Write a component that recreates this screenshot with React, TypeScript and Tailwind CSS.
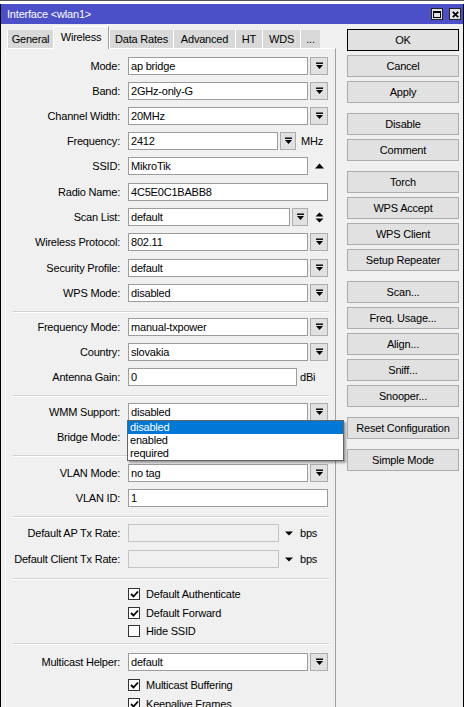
import React from "react";

const DropIcon = () => (
  <svg width="9" height="8" viewBox="0 0 9 8">
    <rect x="1" y="0.5" width="7" height="1.4" fill="#000" />
    <path d="M1 3h7L4.5 7z" fill="#000" />
  </svg>
);

const DropBtn = ({ className = "w-[18px]" }: { className?: string }) => (
  <div className={`${className} h-[18px] border border-[#adadad] bg-[#e1e1e1] flex items-center justify-center`}>
    <DropIcon />
  </div>
);

const Input = ({
  className,
  value = "",
  disabled = false,
}: {
  className: string;
  value?: string;
  disabled?: boolean;
}) => (
  <div
    className={`${className} h-[18px] border ${
      disabled ? "border-[#c4c4c4] bg-[#f0f0f0]" : "border-[#9c9c9c] bg-white"
    } pl-[2px] leading-[16px] whitespace-nowrap overflow-hidden`}
  >
    {value}
  </div>
);

const Row = ({
  label,
  mt,
  children,
}: {
  label: string;
  mt: string;
  children?: React.ReactNode;
}) => (
  <div className={`flex items-center h-[18px] ${mt}`}>
    <div className="w-[114px] text-right whitespace-nowrap">{label}</div>
    <div className="ml-[8px] flex items-center">{children}</div>
  </div>
);

const Select = ({ value }: { value: string }) => (
  <>
    <Input className="w-[180px]" value={value} />
    <div className="ml-[2px]">
      <DropBtn />
    </div>
  </>
);

const Sep = ({ mt }: { mt: string }) => (
  <div className={`${mt} ml-[7px] w-[316px] h-[2px] border-t border-[#d2d2d2] border-b border-b-white`} />
);

const Check = ({ label, checked, mt }: { label: string; checked: boolean; mt: string }) => (
  <div className={`flex items-center h-[12px] leading-[12px] ${mt} ml-[122px]`}>
    <div className="w-[12px] h-[12px] border border-[#333] bg-white flex items-center justify-center">
      {checked && (
        <svg width="9" height="8" viewBox="0 0 9 8">
          <path d="M1 4l2.5 2.5L8 1.5" stroke="#000" strokeWidth="1.8" fill="none" />
        </svg>
      )}
    </div>
    <span className="ml-[6px] whitespace-nowrap">{label}</span>
  </div>
);

const Btn = ({ label, mt, ok = false }: { label: string; mt: string; ok?: boolean }) => (
  <div
    className={`${mt} w-[112px] h-[22px] flex items-center justify-center border ${
      ok ? "border-black" : "border-[#adadad]"
    } bg-[#e1e1e1] whitespace-nowrap`}
  >
    {label}
  </div>
);

const tabs = [
  { name: "General", w: "w-[46px]" },
  { name: "Wireless", w: "w-[56px]", active: true },
  { name: "Data Rates", w: "w-[64px]" },
  { name: "Advanced", w: "w-[62px]" },
  { name: "HT", w: "w-[27px]" },
  { name: "WDS", w: "w-[38px]" },
  { name: "...", w: "w-[20px]" },
];

export default function App() {
  return (
    <div className="relative w-[464px] h-[707px] overflow-hidden bg-[#f0f0f0] text-[11px] tracking-[-0.2px] text-black font-['Liberation_Sans',Arial,sans-serif]">
      <div className="h-[4px] bg-white border-t border-[#555]" />
      <div className="border-l border-r border-black">
        {/* title bar */}
        <div className="h-[20px] bg-[#4b4fc8] flex items-center justify-between pl-[6px] pr-[2px]">
          <span className="text-white">Interface &lt;wlan1&gt;</span>
          <div className="flex items-center gap-[6px]">
            <div className="w-[12px] h-[12px] bg-[#e3e3e3] border border-[#222] flex items-center justify-center">
              <div className="w-[8px] h-[7px] border border-black border-t-2" />
            </div>
            <div className="w-[12px] h-[12px] bg-[#e3e3e3] border border-[#222] flex items-center justify-center">
              <svg width="7" height="7" viewBox="0 0 7 7">
                <path d="M0.8 0.8l5.4 5.4M6.2 0.8l-5.4 5.4" stroke="#000" strokeWidth="1.8" />
              </svg>
            </div>
          </div>
        </div>

        <div className="flex flex-row items-start">
          {/* left panel */}
          <div className="ml-[4px] w-[331px]">
            <div className="mt-[2px] h-[22px] flex items-end pl-[2px]">
              {tabs.map((t) =>
                t.active ? (
                  <div
                    key={t.name}
                    className={`${t.w} h-[23px] mb-[-1px] relative z-10 bg-[#f0f0f0] border-l border-t border-white border-r border-r-[#a0a0a0] flex items-center justify-center pb-[2px]`}
                  >
                    {t.name}
                  </div>
                ) : (
                  <div
                    key={t.name}
                    className={`${t.w} h-[18px] bg-[#d9d9d9] border-l border-white flex items-center justify-center whitespace-nowrap`}
                  >
                    {t.name}
                  </div>
                )
              )}
            </div>
            <div className="h-[700px] border-t border-l border-white border-r border-r-[#a0a0a0]">
              <Row label="Mode:" mt="mt-[8px]">
                <Select value="ap bridge" />
              </Row>
              <Row label="Band:" mt="mt-[7px]">
                <Select value="2GHz-only-G" />
              </Row>
              <Row label="Channel Width:" mt="mt-[7px]">
                <Select value="20MHz" />
              </Row>
              <Row label="Frequency:" mt="mt-[7px]">
                <Input className="w-[150px]" value="2412" />
                <div className="ml-[2px]">
                  <DropBtn className="w-[16px]" />
                </div>
                <span className="ml-[5px]">MHz</span>
              </Row>
              <Row label="SSID:" mt="mt-[7px]">
                <Input className="w-[180px]" value="MikroTik" />
                <svg className="ml-[7px]" width="9" height="6" viewBox="0 0 9 6">
                  <path d="M0 5.5h9L4.5 0.5z" fill="#000" />
                </svg>
              </Row>
              <Row label="Radio Name:" mt="mt-[8px]">
                <Input className="w-[200px]" value="4C5E0C1BABB8" />
              </Row>
              <Row label="Scan List:" mt="mt-[7px]">
                <Input className="w-[162px]" value="default" />
                <div className="ml-[2px]">
                  <DropBtn className="w-[16px]" />
                </div>
                <svg className="ml-[7px]" width="9" height="11" viewBox="0 0 9 11">
                  <path d="M0.5 4.5h8L4.5 0.5z" fill="#000" />
                  <path d="M0.5 6.5h8L4.5 10.5z" fill="#000" />
                </svg>
              </Row>
              <Row label="Wireless Protocol:" mt="mt-[7px]">
                <Select value="802.11" />
              </Row>
              <Row label="Security Profile:" mt="mt-[8px]">
                <Select value="default" />
              </Row>
              <Row label="WPS Mode:" mt="mt-[7px]">
                <Select value="disabled" />
              </Row>
              <Sep mt="mt-[9px]" />
              <Row label="Frequency Mode:" mt="mt-[5px]">
                <Select value="manual-txpower" />
              </Row>
              <Row label="Country:" mt="mt-[7px]">
                <Select value="slovakia" />
              </Row>
              <Row label="Antenna Gain:" mt="mt-[7px]">
                <Input className="w-[169px]" value="0" />
                <span className="ml-[3px]">dBi</span>
              </Row>
              <Sep mt="mt-[9px]" />
              <Row label="WMM Support:" mt="mt-[6px]">
                <Select value="disabled" />
              </Row>
              {/* control hidden under the open list */}
              <Row label="Bridge Mode:" mt="mt-[7px]">
                <Select value="" />
              </Row>
              <Sep mt="mt-[9px]" />
              <Row label="VLAN Mode:" mt="mt-[7px]">
                <Select value="no tag" />
              </Row>
              <Row label="VLAN ID:" mt="mt-[7px]">
                <Input className="w-[200px]" value="1" />
              </Row>
              <Sep mt="mt-[9px]" />
              <Row label="Default AP Tx Rate:" mt="mt-[6px]">
                <Input className="w-[151px]" disabled />
                <svg className="ml-[6px]" width="8" height="5" viewBox="0 0 8 5">
                  <path d="M0 0.5h8L4 4.5z" fill="#000" />
                </svg>
                <span className="ml-[7px]">bps</span>
              </Row>
              <Row label="Default Client Tx Rate:" mt="mt-[8px]">
                <Input className="w-[151px]" disabled />
                <svg className="ml-[6px]" width="8" height="5" viewBox="0 0 8 5">
                  <path d="M0 0.5h8L4 4.5z" fill="#000" />
                </svg>
                <span className="ml-[7px]">bps</span>
              </Row>
              <Sep mt="mt-[10px]" />
              <Check label="Default Authenticate" checked mt="mt-[8px]" />
              <Check label="Default Forward" checked mt="mt-[7px]" />
              <Check label="Hide SSID" checked={false} mt="mt-[6px]" />
              <Sep mt="mt-[6px]" />
              <Row label="Multicast Helper:" mt="mt-[8px]">
                <Select value="default" />
              </Row>
              <Check label="Multicast Buffering" checked mt="mt-[8px]" />
              <Check label="Keepalive Frames" checked mt="mt-[7px]" />
            </div>
          </div>

          {/* right buttons */}
          <div className="ml-[11px] mt-[5px] flex flex-col">
            <Btn label="OK" mt="mt-0" ok />
            <Btn label="Cancel" mt="mt-[4px]" />
            <Btn label="Apply" mt="mt-[4px]" />
            <Btn label="Disable" mt="mt-[10px]" />
            <Btn label="Comment" mt="mt-[4px]" />
            <Btn label="Torch" mt="mt-[10px]" />
            <Btn label="WPS Accept" mt="mt-[4px]" />
            <Btn label="WPS Client" mt="mt-[4px]" />
            <Btn label="Setup Repeater" mt="mt-[4px]" />
            <Btn label="Scan..." mt="mt-[10px]" />
            <Btn label="Freq. Usage..." mt="mt-[4px]" />
            <Btn label="Align..." mt="mt-[4px]" />
            <Btn label="Sniff..." mt="mt-[4px]" />
            <Btn label="Snooper..." mt="mt-[4px]" />
            <Btn label="Reset Configuration" mt="mt-[10px]" />
            <Btn label="Simple Mode" mt="mt-[10px]" />
          </div>
        </div>
      </div>

      {/* WMM Support dropdown list */}
      <div className="absolute left-[127px] top-[420px] w-[217px] h-[41px] border border-[#646464] bg-white shadow-[2px_2px_2px_rgba(0,0,0,0.35)] flex flex-col">
        <div className="h-[13px] leading-[13px] pl-[2px] bg-[#0078d7] text-white">disabled</div>
        <div className="h-[13px] leading-[13px] pl-[2px]">enabled</div>
        <div className="h-[13px] leading-[13px] pl-[2px]">required</div>
      </div>
    </div>
  );
}
